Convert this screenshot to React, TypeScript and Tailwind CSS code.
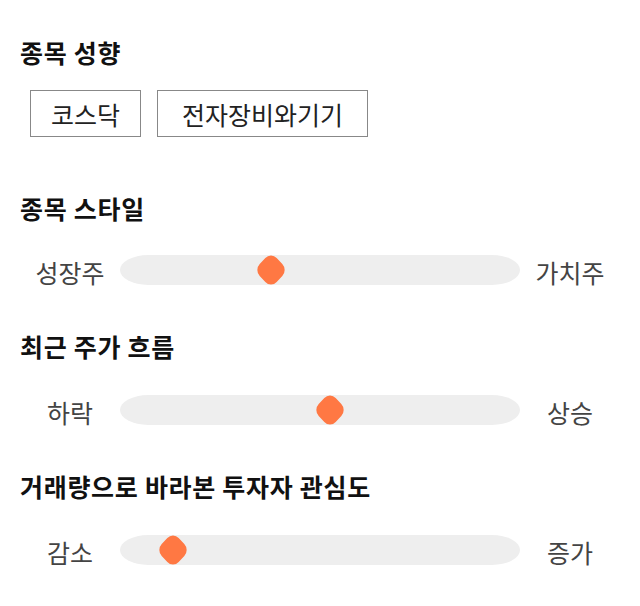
import React from 'react';

const SLIDERS = [
  { title: '종목 스타일', left: '성장주', right: '가치주', pos: 137 },
  { title: '최근 주가 흐름', left: '하락', right: '상승', pos: 196 },
  { title: '거래량으로 바라본 투자자 관심도', left: '감소', right: '증가', pos: 39 },
];

function Thumb() {
  return (
    <svg width="28" height="30" viewBox="0 0 28 30" className="block overflow-visible">
      <rect
        x="-12"
        y="-12"
        width="24"
        height="24"
        rx="8"
        fill="#ff7843"
        transform="translate(14 15) scale(1 1.07) rotate(45)"
      />
    </svg>
  );
}

function Slider({ left, right, pos }: { left: string; right: string; pos: number }) {
  return (
    <div className="flex items-center h-[30px]">
      <div className="w-[100px] text-center text-[25px] leading-[30px] text-[#444] pt-[4px]">{left}</div>
      <div className="relative w-[400px] h-[30px] bg-[#eeeeee] rounded-[28px/15px]">
        <div className="absolute top-0" style={{ left: pos }}>
          <Thumb />
        </div>
      </div>
      <div className="w-[100px] text-center text-[25px] leading-[30px] text-[#444] pt-[4px]">{right}</div>
    </div>
  );
}

export default function App() {
  return (
    <div className="w-[640px] h-[606px] bg-white px-5 pt-[36px] font-['Noto_Sans_CJK_KR',sans-serif]">
      <h2 className="text-[25px] leading-[32px] font-bold tracking-[0.7px] text-[#111]">종목 성향</h2>
      <div className="flex gap-4 ml-[10px] mt-[22px]">
        <div className="h-[47px] px-[20px] pt-[3px] flex items-center border border-[#888] text-[25px] text-[#222]">코스닥</div>
        <div className="h-[47px] px-[24px] pt-[3px] flex items-center border border-[#888] text-[25px] text-[#222]">전자장비와기기</div>
      </div>

      {SLIDERS.map((s, i) => (
        <div key={i} className={i === 0 ? 'mt-[55px]' : 'mt-[45px]'}>
          <h2 className="text-[25px] leading-[32px] font-bold tracking-[0.7px] text-[#111]">{s.title}</h2>
          <div className={i === 0 ? 'mt-[31px]' : 'mt-[33px]'}>
            <Slider left={s.left} right={s.right} pos={s.pos} />
          </div>
        </div>
      ))}
    </div>
  );
}
